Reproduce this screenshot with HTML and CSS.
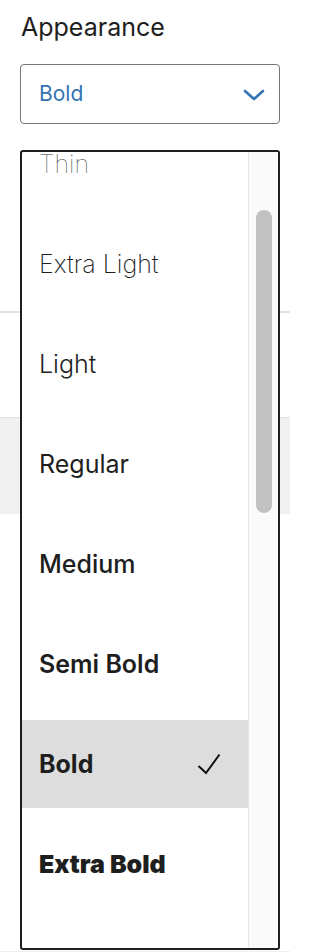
FILE: index.html
```html
<!DOCTYPE html>
<html>
<head>
<meta charset="utf-8">
<link rel="stylesheet" href="styles.css">
</head>
<body>
<div class="page">
  <div class="field">
    <div class="label">Appearance</div>
    <div class="select">
      <span class="select-value">Bold</span>
      <svg class="chevron" width="22" height="12" viewBox="0 0 22 12"><path d="M2 2 L11 10 L20 2" fill="none" stroke="#3373b4" stroke-width="2.6" stroke-linecap="round" stroke-linejoin="round"/></svg>
    </div>
  </div>
  <div class="bg-section s1"></div>
  <div class="bg-section s2"></div>
  <div class="bg-section s3"></div>
  <div class="bg-section s4"></div>
  <div class="bg-section s5"></div>

  <div class="dropdown">
    <div class="list">
      <div class="list-inner">
        <div class="item w100">Thin</div>
        <div class="item w200">Extra Light</div>
        <div class="item w300">Light</div>
        <div class="item w400">Regular</div>
        <div class="item w500">Medium</div>
        <div class="item w600">Semi Bold</div>
        <div class="item w700 selected"><span>Bold</span><svg class="check" width="24" height="22" viewBox="0 0 24 22"><path d="M1.5 13 L9 20 L22.5 1.5" fill="none" stroke="#111" stroke-width="2"/></svg></div>
        <div class="item w800">Extra Bold</div>
      </div>
    </div>
    <div class="track"><div class="thumb"></div></div>
  </div>
</div>
</body>
</html>
```
FILE: styles.css
```css
html, body {
  margin: 0;
  padding: 0;
  background: #ffffff;
}
body {
  font-family: Inter, "Noto Sans", sans-serif;
  color: #1e1e1e;
  width: 290px;
  height: 952px;
  overflow: hidden;
}
.page {
  position: relative;
  height: 952px;
}
.field {
  padding: 12px 10px 0 20px;
  height: 297px;
  box-sizing: border-box;
}
.label {
  font-size: 25px;
  line-height: 30px;
  padding-left: 1px;
}
.select {
  margin-top: 22px;
  height: 60px;
  box-sizing: border-box;
  border: 1px solid #757575;
  border-radius: 4px;
  display: flex;
  align-items: center;
  justify-content: space-between;
  padding: 0 14px 0 18px;
}
.select-value {
  font-size: 21px;
  color: #3373b4;
  padding-bottom: 2px;
}
.chevron {
  display: block;
  margin-top: 2px;
}
.bg-section.s1 {
  height: 14px;
  border-bottom: 2px solid #e2e2e2;
}
.bg-section.s2 {
  height: 104px;
}
.bg-section.s3 {
  height: 96px;
  background: #f0f0f0;
  border-top: 1px solid #e2e2e2;
}
.bg-section.s4 {
  height: 437px;
}
.bg-section.s5 {
  height: 10px;
  background: #f0f0f0;
}
.dropdown {
  position: absolute;
  left: 20px;
  top: 150px;
  width: 260px;
  height: 800px;
  box-sizing: border-box;
  border: 2px solid #1e1e1e;
  border-radius: 3px;
  background: #ffffff;
  display: flex;
  overflow: hidden;
}
.list {
  flex: 1;
  overflow: hidden;
}
.list-inner {
  margin-top: -32px;
  display: flex;
  flex-direction: column;
  gap: 12px;
}
.item {
  height: 88px;
  flex: none;
  display: flex;
  align-items: center;
  justify-content: space-between;
  padding: 0 27px 0 17px;
  font-size: 25px;
  line-height: 20px;
  color: #1e1e1e;
}
.item.selected {
  background: #dddddd;
}
.check {
  display: block;
}
.w100 { font-weight: 100; color: #333333; }
.w200 { font-weight: 200; }
.w300 { font-weight: 300; }
.w400 { font-weight: 400; }
.w500 { font-weight: 500; }
.w600 { font-weight: 600; }
.w700 { font-weight: 700; }
.w800 { font-weight: 900; }
.track {
  width: 29px;
  flex: none;
  background: #fafafa;
  border-left: 1px solid #e6e6e6;
}
.thumb {
  margin: 58px 0 0 7px;
  width: 16px;
  height: 303px;
  border-radius: 8px;
  background: #c1c1c1;
}
```
